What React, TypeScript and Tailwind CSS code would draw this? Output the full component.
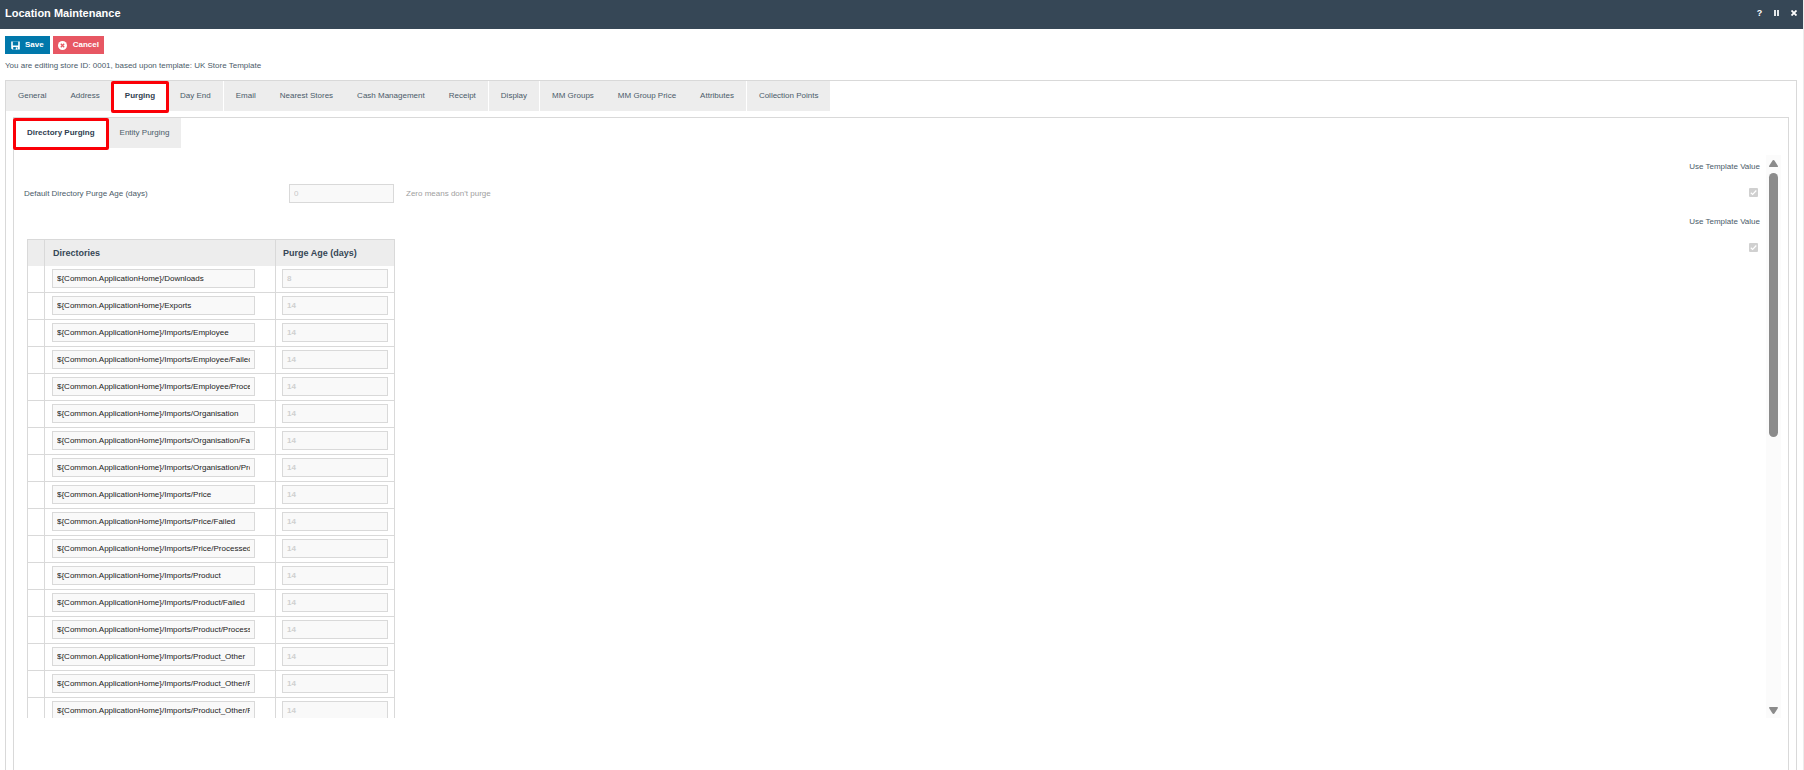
import React from "react";

const tabs = [
  { label: "General" },
  { label: "Address" },
  { label: "Purging", active: true },
  { label: "Day End", divider: true },
  { label: "Email" },
  { label: "Nearest Stores" },
  { label: "Cash Management" },
  { label: "Receipt", divider: true },
  { label: "Display", divider: true },
  { label: "MM Groups" },
  { label: "MM Group Price" },
  { label: "Attributes", divider: true },
  { label: "Collection Points" },
];

const directories = [
  ["Downloads", "8"],
  ["Exports", "14"],
  ["Imports/Employee", "14"],
  ["Imports/Employee/Failed", "14"],
  ["Imports/Employee/Processed", "14"],
  ["Imports/Organisation", "14"],
  ["Imports/Organisation/Failed", "14"],
  ["Imports/Organisation/Processed", "14"],
  ["Imports/Price", "14"],
  ["Imports/Price/Failed", "14"],
  ["Imports/Price/Processed", "14"],
  ["Imports/Product", "14"],
  ["Imports/Product/Failed", "14"],
  ["Imports/Product/Processed", "14"],
  ["Imports/Product_Other", "14"],
  ["Imports/Product_Other/Failed", "14"],
  ["Imports/Product_Other/Processed", "14"],
];

function Tab({ label, active, divider }: { label: string; active?: boolean; divider?: boolean }) {
  return (
    <button
      type="button"
      role="tab"
      aria-selected={!!active}
      className={
        "relative h-[30px] whitespace-nowrap " +
        (active ? "bg-white px-[13px] font-bold text-[#2f4050] " : "bg-[#ededed] px-3 ") +
        (divider ? "border-r border-white" : "")
      }
    >
      {label}
      {active && (
        <span className="pointer-events-none absolute -inset-x-px -bottom-0.5 top-0 z-10 rounded-[2px] border-[3px] border-[#fb0007]" />
      )}
    </button>
  );
}

function TemplateValue({ id }: { id: string }) {
  return (
    <div className="flex w-20 flex-col items-end pr-1.5">
      <label htmlFor={id} className="mt-px h-4 whitespace-nowrap leading-4">
        Use Template Value
      </label>
      <span className="relative mr-0.5 mt-[13px] flex size-[9px]">
        <input
          id={id}
          type="checkbox"
          defaultChecked
          disabled
          className="size-[9px] appearance-none rounded-[1px] bg-[#d0d0d0]"
        />
        <svg viewBox="0 0 9 9" className="pointer-events-none absolute inset-0 size-[9px]" fill="none" stroke="#fff" strokeWidth="1.2">
          <path d="M1.8 4.8 3.6 6.5 7.3 2.5" />
        </svg>
      </span>
    </div>
  );
}

export default function App() {
  return (
    <div className="flex h-screen flex-col overflow-hidden border-r border-[#ececec] bg-white font-['Liberation_Sans',Arial,sans-serif] text-[8px] leading-3 text-[#4a5b69]">
      <header className="flex h-[29px] shrink-0 items-center justify-between bg-[#364756] pb-1 pl-[5px] pr-[5px] text-white">
        <h1 className="text-[11px] font-bold">Location Maintenance</h1>
        <div className="flex gap-2">
          <button type="button" aria-label="Help" className="flex w-[9px] justify-center text-[9px] font-bold">?</button>
          <button type="button" aria-label="Pause" className="flex w-[9px] items-center justify-center">
            <svg viewBox="0 0 5 6" className="h-1.5 w-[5px]" fill="#e4e7e9"><path d="M0 0h2v6H0zM3 0h2v6H3z" /></svg>
          </button>
          <button type="button" aria-label="Close" className="flex w-[9px] items-center justify-center">
            <svg viewBox="0 0 6 6" className="size-1.5" stroke="#fff" strokeWidth="1.8"><path d="m.5.5 5 5m0-5-5 5" /></svg>
          </button>
        </div>
      </header>

      <div className="mt-[7px] flex shrink-0 gap-[3px] pl-[5px] font-bold text-white">
        <button type="button" className="flex h-[18px] items-center gap-[5px] bg-[#0078ab] px-1.5">
          <svg viewBox="0 0 9 9" className="size-[9px]">
            <path d="M.2.4h8.6v8.2H1.4L.2 7.4z" fill="#fff" />
            <path d="M1.8.4h5.4v4H1.8zM2.2 6h4.6v2.6H2.2z" fill="#0078ab" />
            <path d="M4.8 6.4h1.6v2.2H4.8z" fill="#fff" />
          </svg>
          Save
        </button>
        <button type="button" className="flex h-[18px] items-center gap-1.5 bg-[#e75763] px-[5px]">
          <svg viewBox="0 0 9 9" className="size-[9px]">
            <circle cx="4.5" cy="4.5" r="4.5" fill="#fff" />
            <path d="m2.8 2.8 3.4 3.4m0-3.4L2.8 6.2" stroke="#e75763" strokeWidth="1.3" />
          </svg>
          Cancel
        </button>
      </div>

      <p className="mt-1.5 shrink-0 pl-[5px]">You are editing store ID: 0001, based upon template: UK Store Template</p>

      <main className="ml-[5px] mr-1.5 mt-2 flex min-h-0 flex-1 flex-col border border-b-0 border-[#d9d9d9]">
        <div role="tablist" aria-label="Location" className="flex shrink-0">
          {tabs.map((t) => <Tab key={t.label} {...t} />)}
        </div>
        <section className="mx-[7px] mt-1.5 flex min-h-0 flex-1 flex-col border border-b-0 border-[#d9d9d9]">
          <div role="tablist" aria-label="Purging" className="flex shrink-0">
            <Tab label="Directory Purging" active />
            <Tab label="Entity Purging" />
          </div>

          <div className="mb-[52px] mr-[7px] mt-[7px] flex min-h-0 flex-1">
            <div className="min-w-0 flex-1 overflow-hidden pl-2.5 pt-[3px]">
              <div className="flex h-[55px]">
                <div className="mt-[26px] flex h-[19px] flex-1 items-center">
                  <label htmlFor="default-age" className="w-[265px]">Default Directory Purge Age (days)</label>
                  <input id="default-age" disabled defaultValue="0" className="h-[19px] w-[105px] border border-[#d9d9d9] bg-[#f9f9f9] px-1 text-[#c8c8c8]" />
                  <span className="ml-3 text-[#a0a0a0]">Zero means don't purge</span>
                </div>
                <TemplateValue id="template-default" />
              </div>
              <div className="flex">
                <div className="flex-1">
                  <table className="ml-[3px] mt-[26px] table-fixed border-collapse text-left">
                    <colgroup>
                      <col className="w-[17px]" />
                      <col className="w-[231px]" />
                      <col className="w-[119px]" />
                    </colgroup>
                    <thead>
                      <tr className="h-[26px] bg-[#ededed] text-[9px] text-[#364756]">
                        <th className="border-x border-t border-[#d9d9d9] p-0" />
                        <th className="border-x border-t border-[#d9d9d9] px-2 py-0">Directories</th>
                        <th className="border-x border-t border-[#d9d9d9] px-[7px] py-0">Purge Age (days)</th>
                      </tr>
                    </thead>
                    <tbody>
                      {directories.map(([path, age], i) => (
                        <tr key={path} className="h-[27px]">
                          <td className="border-x border-b border-[#d9d9d9] p-0" />
                          <td className="border-x border-b border-[#d9d9d9] px-[7px] pb-px pt-0">
                            <input
                              aria-label={"Directory " + (i + 1)}
                              readOnly
                              defaultValue={"${Common.ApplicationHome}/" + path}
                              className="block h-[19px] w-[203px] border border-[#d9d9d9] bg-[#f9f9f9] px-1 text-[#222]"
                            />
                          </td>
                          <td className="border-x border-b border-[#d9d9d9] px-1.5 pb-px pt-0">
                            <input
                              aria-label={"Purge age " + (i + 1)}
                              disabled
                              defaultValue={age}
                              className="block h-[19px] w-[106px] border border-[#d9d9d9] bg-[#f9f9f9] px-1 font-bold text-[#d0d0d0]"
                            />
                          </td>
                        </tr>
                      ))}
                    </tbody>
                  </table>
                </div>
                <TemplateValue id="template-directories" />
              </div>
            </div>
            <div aria-hidden="true" className="flex w-[15px] shrink-0 flex-col items-center bg-[#fbfbfb] pb-1 pt-[5px]">
              <svg viewBox="0 0 9 7" className="h-[7px] w-[9px] shrink-0" fill="#8b8b8b"><path d="M4.5 0Q5.2 0 5.6.7L8.8 5.8Q9.3 7 8.2 7H.8Q-.3 7 .2 5.8L3.4.7Q3.8 0 4.5 0Z" /></svg>
              <div className="my-1.5 flex w-[9px] flex-1 flex-col">
                <div className="h-1/2 rounded-full bg-[#8b8b8b]" />
              </div>
              <svg viewBox="0 0 9 7" className="h-[7px] w-[9px] shrink-0" fill="#8b8b8b"><path d="M4.5 7Q3.8 7 3.4 6.3L.2 1.2Q-.3 0 .8 0H8.2Q9.3 0 8.8 1.2L5.6 6.3Q5.2 7 4.5 7Z" /></svg>
            </div>
          </div>
        </section>
      </main>
    </div>
  );
}
